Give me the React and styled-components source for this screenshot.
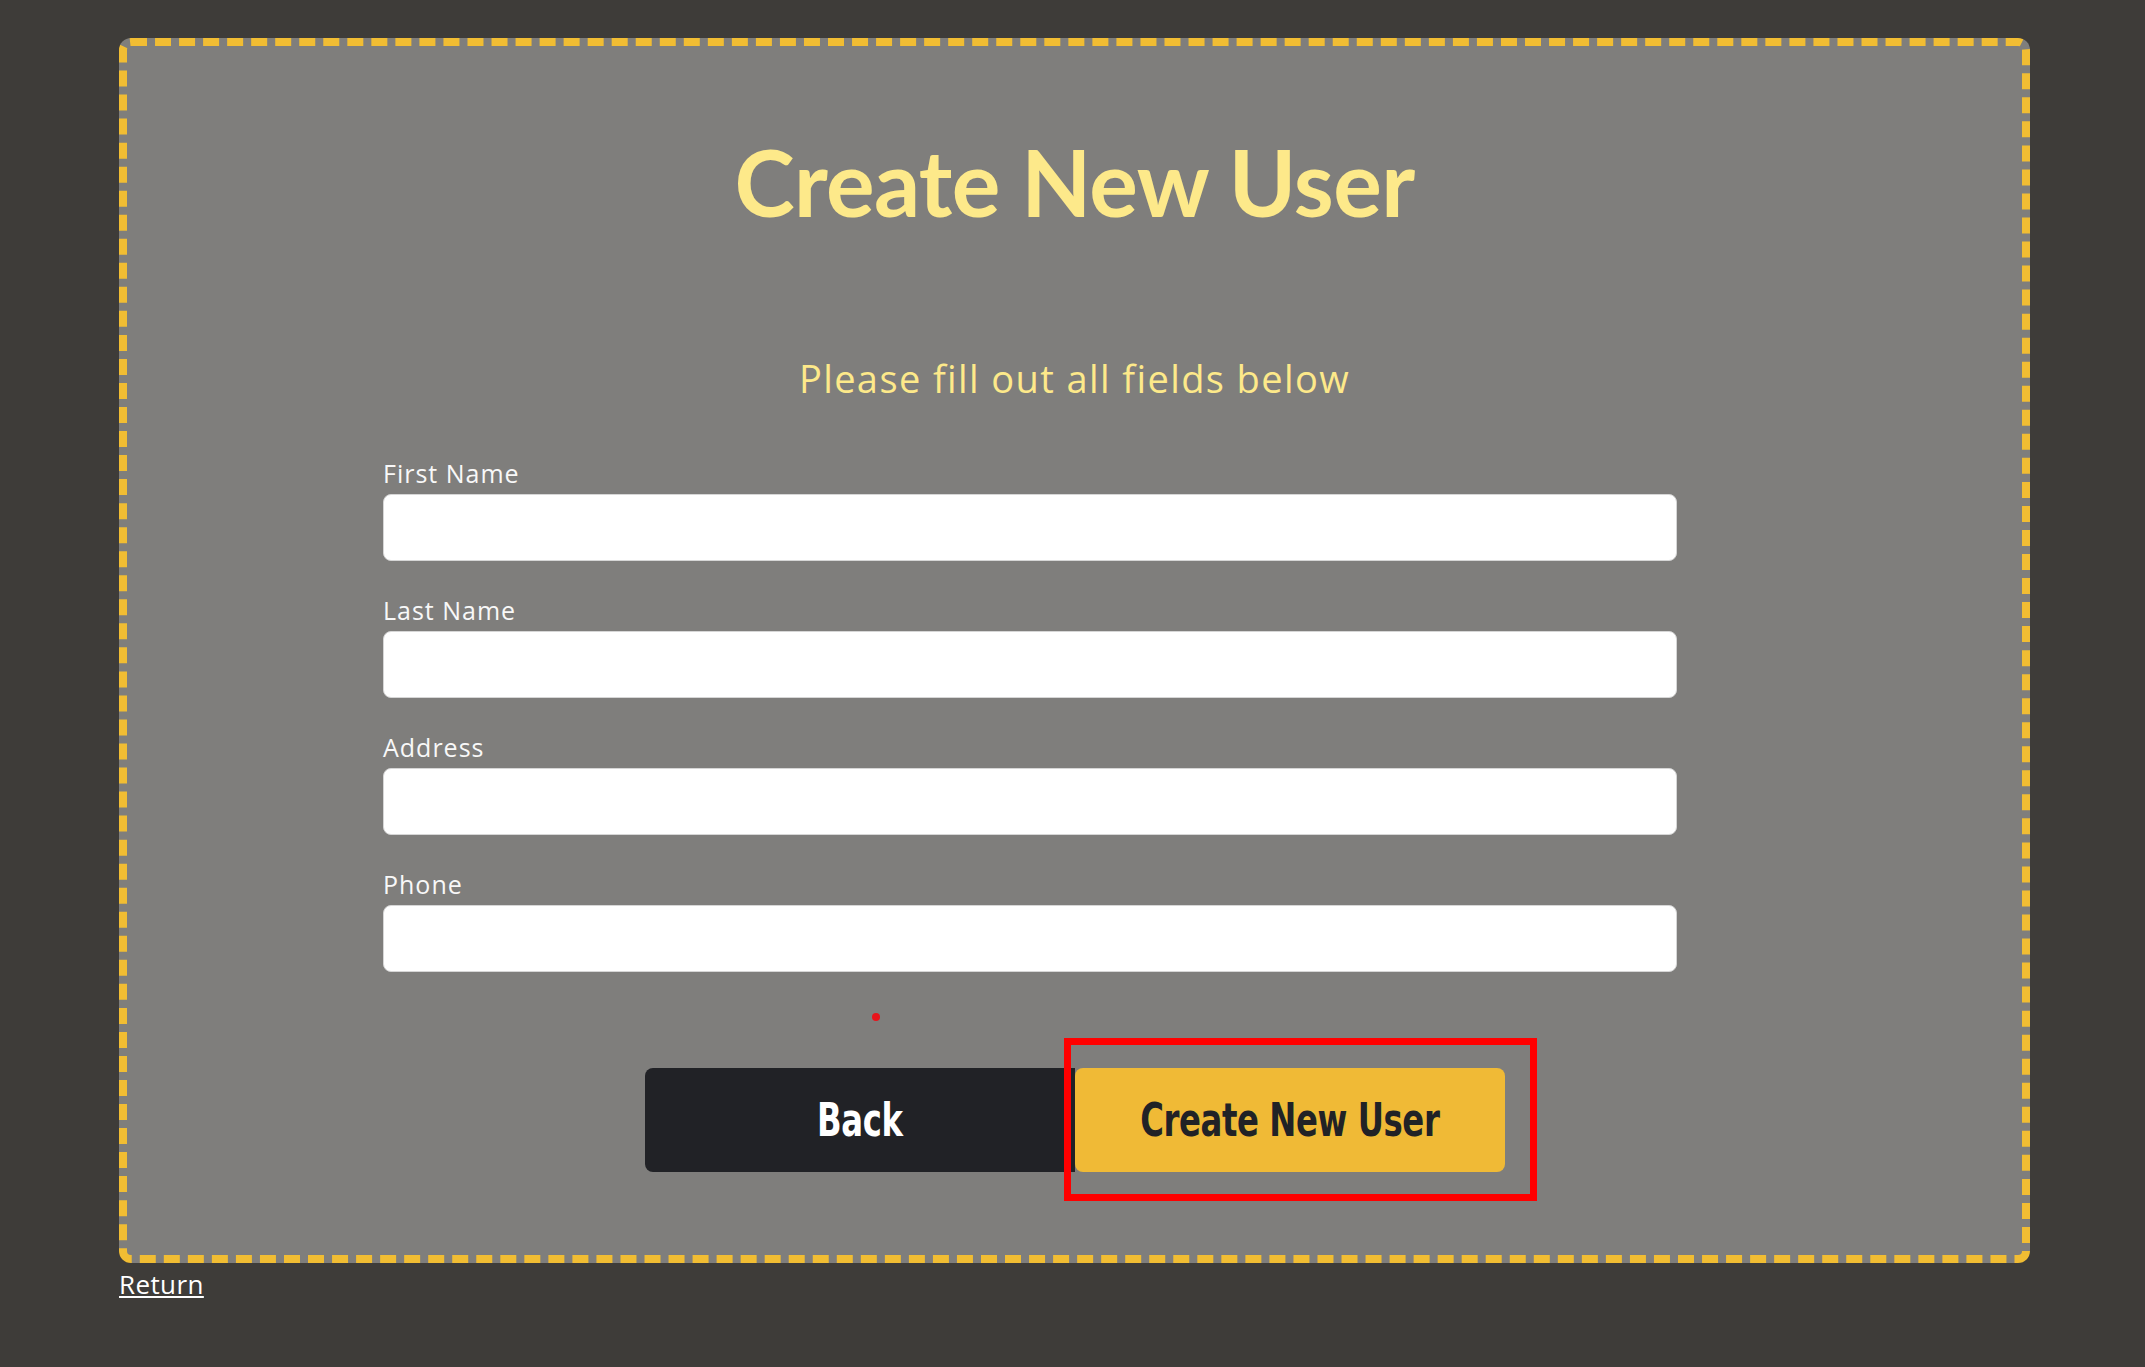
import React from 'react';
import styled, { createGlobalStyle } from 'styled-components';

const GlobalStyle = createGlobalStyle`
  body {
    margin: 0;
    background: #3e3c39;
    font-family: "Open Sans", Lato, sans-serif;
  }
`;

const Page = styled.div`
  min-height: 100vh;
  padding: 38px 0 40px 119px;
  box-sizing: border-box;
`;

const Panel = styled.div`
  width: 1911px;
  box-sizing: border-box;
  background: #7f7e7c;
  border: 8px dashed #f1bd33;
  border-radius: 12px;
  padding: 81px 0 83px;
  display: flex;
  flex-direction: column;
`;

const Title = styled.h1`
  margin: 0;
  font-family: Lato, sans-serif;
  font-weight: 700;
  font-size: 91px;
  letter-spacing: -0.6px;
  line-height: 1.2;
  color: #fde98a;
  text-align: center;
`;

const Subtitle = styled.h2`
  margin: 120px 0 0;
  font-family: "Open Sans", sans-serif;
  font-weight: 400;
  font-size: 38px;
  letter-spacing: 1.4px;
  line-height: 1.2;
  color: #fde98a;
  text-align: center;
`;

const Form = styled.form`
  margin: 56px 0 0 256px;
  width: 1294px;
  display: flex;
  flex-direction: column;
  gap: 34px;
`;

const Field = styled.div`
  display: flex;
  flex-direction: column;
  gap: 6px;
`;

const Label = styled.label`
  font-family: "Open Sans", sans-serif;
  font-size: 25px;
  letter-spacing: 1px;
  line-height: 1.2;
  color: #f8f8f8;
`;

const Input = styled.input`
  height: 67px;
  box-sizing: border-box;
  border: 1px solid #d6d6d6;
  border-radius: 8px;
  background: #fff;
  padding: 0 16px;
  font-size: 22px;
`;

const Dot = styled.span`
  display: block;
  width: 8px;
  height: 8px;
  border-radius: 50%;
  background: #e8141b;
  margin: 41px 0 0 745px;
`;

const Actions = styled.div`
  margin-top: 47px;
  display: flex;
  justify-content: center;
`;

const Button = styled.button`
  width: 430px;
  height: 104px;
  border: none;
  padding: 0;
  cursor: pointer;
  background: ${p => (p.primary ? '#f0ba36' : '#212226')};
  color: ${p => (p.primary ? '#212226' : '#ffffff')};
  border-radius: ${p => (p.primary ? '8px' : '8px 0 0 8px')};
`;

const ButtonText = styled.span`
  display: inline-block;
  font-family: "DejaVu Sans Condensed", "DejaVu Sans", sans-serif;
  font-weight: 700;
  font-size: 46px;
  letter-spacing: -0.5px;
  transform: scaleX(0.78);
`;

const Highlight = styled.div`
  position: relative;
`;

const Marker = styled.span`
  position: absolute;
  left: -11px;
  right: -32px;
  top: -30px;
  bottom: -29px;
  border: 7px solid #ff0000;
  pointer-events: none;
`;

const ReturnLink = styled.a`
  display: inline-block;
  margin-top: 6px;
  font-family: "Open Sans", sans-serif;
  font-size: 26px;
  letter-spacing: 0.4px;
  line-height: 1.2;
  color: #ffffff;
  text-decoration: underline;
`;

const fields = ['First Name', 'Last Name', 'Address', 'Phone'];

export default function App() {
  return (
    <Page>
      <GlobalStyle />
      <Panel>
        <Title>Create New User</Title>
        <Subtitle>Please fill out all fields below</Subtitle>
        <Form onSubmit={e => e.preventDefault()}>
          {fields.map(f => (
            <Field key={f}>
              <Label>{f}</Label>
              <Input type="text" />
            </Field>
          ))}
        </Form>
        <Dot />
        <Actions>
          <Button type="button"><ButtonText>Back</ButtonText></Button>
          <Highlight>
            <Button type="button" primary><ButtonText>Create New User</ButtonText></Button>
            <Marker />
          </Highlight>
        </Actions>
      </Panel>
      <ReturnLink href="#">Return</ReturnLink>
    </Page>
  );
}
